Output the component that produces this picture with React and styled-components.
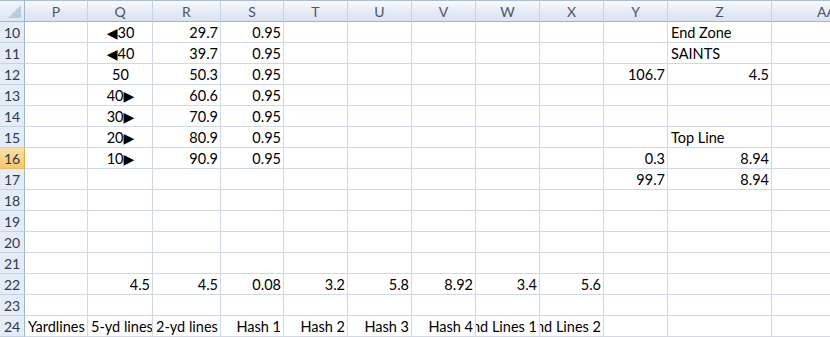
import React from 'react';
import styled, { createGlobalStyle } from 'styled-components';

const GlobalStyle = createGlobalStyle`
  body {
    margin: 0;
    background: #fff;
    overflow: hidden;
  }
`;

const COLUMNS = [
  { name: 'P', width: 63 },
  { name: 'Q', width: 65 },
  { name: 'R', width: 68 },
  { name: 'S', width: 63 },
  { name: 'T', width: 64 },
  { name: 'U', width: 64 },
  { name: 'V', width: 64 },
  { name: 'W', width: 64 },
  { name: 'X', width: 64 },
  { name: 'Y', width: 64 },
  { name: 'Z', width: 104 },
  { name: 'AA', width: 110 },
];

const L = '\u25C0';
const R = '\u25B6';

// value, alignment
const DATA = {
  10: { Q: [`${L}30`, 'center'], R: ['29.7'], S: ['0.95'], Z: ['End Zone', 'left'] },
  11: { Q: [`${L}40`, 'center'], R: ['39.7'], S: ['0.95'], Z: ['SAINTS', 'left'] },
  12: { Q: ['50', 'center'], R: ['50.3'], S: ['0.95'], Y: ['106.7'], Z: ['4.5'] },
  13: { Q: [`40${R}`, 'center'], R: ['60.6'], S: ['0.95'] },
  14: { Q: [`30${R}`, 'center'], R: ['70.9'], S: ['0.95'] },
  15: { Q: [`20${R}`, 'center'], R: ['80.9'], S: ['0.95'], Z: ['Top Line', 'left'] },
  16: { Q: [`10${R}`, 'center'], R: ['90.9'], S: ['0.95'], Y: ['0.3'], Z: ['8.94'] },
  17: { Y: ['99.7'], Z: ['8.94'] },
  22: {
    Q: ['4.5'], R: ['4.5'], S: ['0.08'], T: ['3.2'], U: ['5.8'],
    V: ['8.92'], W: ['3.4'], X: ['5.6'],
  },
  24: {
    P: ['Yardlines', 'left'], Q: ['5-yd lines', 'left'], R: ['2-yd lines', 'left'],
    S: ['Hash 1'], T: ['Hash 2'], U: ['Hash 3'], V: ['Hash 4'],
    W: ['End Lines 1'], X: ['End Lines 2'],
  },
};

const ROWS = Array.from({ length: 15 }, (_, i) => 10 + i);
const ACTIVE_ROW = 16;

const Sheet = styled.div`
  display: grid;
  grid-template-columns: 25px ${COLUMNS.map(c => `${c.width}px`).join(' ')};
  grid-auto-rows: 21px;
  grid-template-rows: 22px;
  width: 830px;
  overflow: hidden;
  font-family: Lato, 'Liberation Sans', sans-serif;
  font-size: 14.5px;
  color: #000;
`;

const Corner = styled.div`
  position: relative;
  background: linear-gradient(#f3f6fa, #dde6f2);
  border-top: 1px solid #a8bcd3;
  border-right: 1px solid #9eb6ce;
  border-bottom: 1px solid #9eb6ce;
  box-sizing: border-box;

  &::after {
    content: '';
    position: absolute;
    right: 3px;
    bottom: 3px;
    border-left: 13px solid transparent;
    border-bottom: 13px solid #b9cbe0;
  }
`;

const ColHeader = styled.div`
  display: flex;
  align-items: center;
  justify-content: center;
  box-sizing: border-box;
  background: linear-gradient(#f8fafd, #e4ebf5 55%, #dae3f0);
  border-top: 1px solid #a8bcd3;
  border-right: 1px solid #c5d2e3;
  border-bottom: 1px solid #9eb6ce;
  color: #4c5564;
  font-size: 14px;
  padding-top: 1px;
  white-space: nowrap;
`;

const RowHeader = styled.div`
  display: flex;
  align-items: center;
  justify-content: center;
  box-sizing: border-box;
  background: ${p => (p.$active ? 'linear-gradient(#fbe0a8, #f6c86c)' : '#e4ecf7')};
  border-right: 1px solid ${p => (p.$active ? '#f2a73a' : '#9eb6ce')};
  border-bottom: 1px solid ${p => (p.$active ? '#f2b85c' : '#c5d2e3')};
  color: #2d3a4c;
  font-size: 14px;
`;

const Cell = styled.div`
  display: flex;
  align-items: center;
  justify-content: ${p =>
    p.$align === 'left' ? 'flex-start' : p.$align === 'center' ? 'center' : 'flex-end'};
  box-sizing: border-box;
  border-right: 1px solid #d0d7e5;
  border-bottom: 1px solid #d0d7e5;
  padding: 1px 2px 0 3px;
  overflow: hidden;
  white-space: nowrap;
`;

const Arrowed = styled.span`
  font-family: 'DejaVu Sans', sans-serif;
  font-size: 14px;
  line-height: 1;
`;

const Digits = styled.span``;

// splits "◀30" / "40▶" into glyph + digits so the triangle gets its own font
const renderValue = value => {
  const parts = value.split(/([\u25C0\u25B6])/).filter(Boolean);
  return parts.map((part, i) =>
    part === L || part === R ? <Arrowed key={i}>{part}</Arrowed> : <Digits key={i}>{part}</Digits>
  );
};

export default function App() {
  return (
    <>
      <GlobalStyle />
      <Sheet>
        <Corner />
        {COLUMNS.map(c => (
          <ColHeader key={c.name}>{c.name}</ColHeader>
        ))}
        {ROWS.map(row => (
          <React.Fragment key={row}>
            <RowHeader $active={row === ACTIVE_ROW}>{row}</RowHeader>
            {COLUMNS.map(c => {
              const entry = DATA[row] && DATA[row][c.name];
              return (
                <Cell key={c.name} $align={entry ? entry[1] : undefined}>
                  {entry && (entry[1] === 'center' ? renderValue(entry[0]) : entry[0])}
                </Cell>
              );
            })}
          </React.Fragment>
        ))}
      </Sheet>
    </>
  );
}
